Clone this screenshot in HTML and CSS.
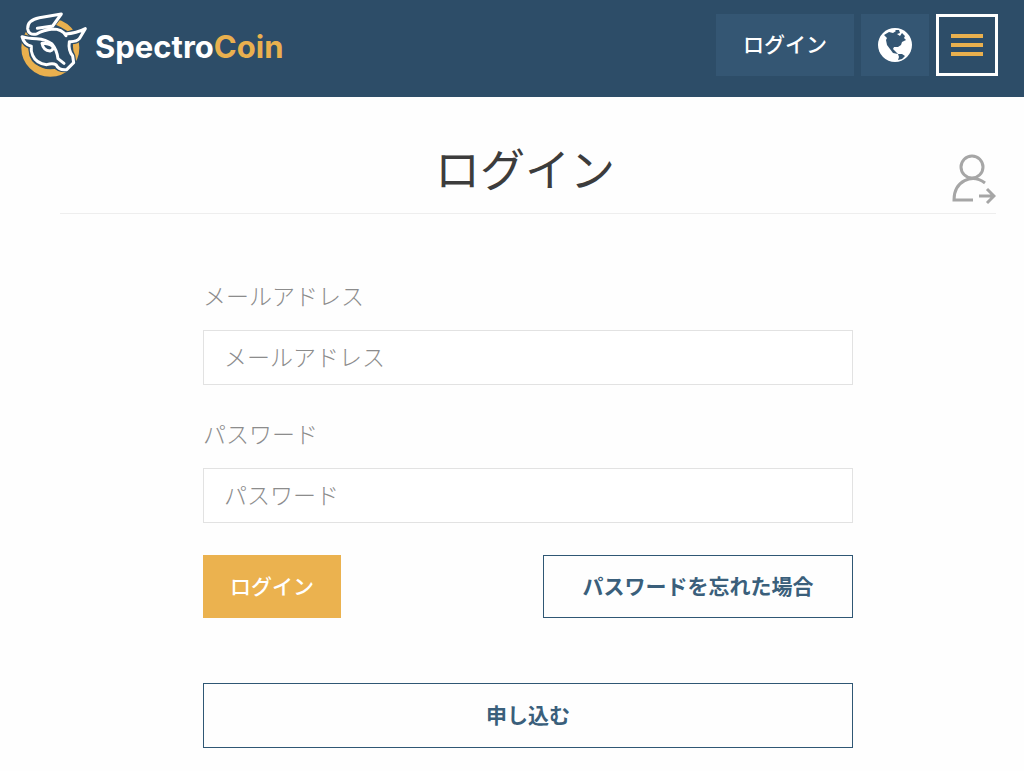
FILE: index.html
```html
<!DOCTYPE html>
<html lang="ja">
<head>
    <meta charset="UTF-8">
    <meta name="viewport" content="width=device-width, initial-scale=1.0">
    <title>ログイン - SpectroCoin</title>
    <link rel="stylesheet" href="styles.css">
</head>
<body>
    <header class="header">
        <a href="#" class="logo">
            <svg class="logo-icon" viewBox="30 24 204 198" aria-hidden="true">
                <circle class="logo-ring" cx="121" cy="131" r="76"/>
                <path class="logo-gap" d="M154 29 L86 41 Q54 50 53 74 Q56 92 76 91 L60 104 L36 98 Q42 122 62 127 L66 154 Q76 180 104 182 L132 180 Q144 198 168 197 L191 176 L188 156 Q178 140 182 113 Q200 114 208 104 L226 74 L172 90 L148 76 L126 66 Z"/>
                <g class="logo-lines">
                    <path d="M82 73 L128 66 L154 30 L88 41 Q52 48 53 74 Q56 95 80 90 Q100 78 128 75 Q156 75 168 95"/>
                    <path d="M166 90 Q200 88 226 74 L208 104 Q200 114 178 113 Q174 138 188 156 L191 176 L170 197 Q146 200 138 182 Q128 176 110 182 Q78 178 68 154 Q62 142 64 127 Q42 122 36 98 Q52 104 80 104 Q108 106 126 120 Q140 136 144 164 L162 178"/>
                    <path d="M96 118 Q100 140 120 141 Q132 138 128 127 Q118 118 96 118 Z"/>
                </g>
            </svg>
            <span class="logo-text">Spectro<span class="logo-coin">Coin</span></span>
        </a>
        <nav class="nav">
            <a href="#" class="nav-login">ログイン</a>
            <button type="button" class="nav-lang" aria-label="言語">
                <svg class="globe" viewBox="0 0 36 36" aria-hidden="true">
                    <circle class="globe-sea" cx="18" cy="18" r="17"/>
                    <path class="globe-land" d="M7 8 L12 5 L16 6 L19 4 L18 3 L22 3 L23 6 L20 7 L23 9 L25 6 L28 9 L27 11 L29 13 L25 15 L24 18 L21 20 L17 20 L16 22 L18 24 L21 27 L16 26 L13 22 L10 18 L9 13 L10 11 Z"/>
                    <path class="globe-land" d="M21 27 L25 27 L28 29 L25 32 L21 33 L22 30 Z"/>
                    <path class="globe-sea" d="M18 20 L21 21 L21 24 L18 23 Z"/>
                </svg>
            </button>
            <button type="button" class="nav-menu" aria-label="メニュー">
                <span class="bar"></span>
                <span class="bar"></span>
                <span class="bar"></span>
            </button>
        </nav>
    </header>

    <main class="container">
        <div class="title-row">
            <h1 class="title">ログイン</h1>
            <svg class="user-icon" viewBox="0 0 46 52" aria-hidden="true">
                <circle cx="22" cy="14" r="11"/>
                <path d="M35 30 C22 20 4 28 4 47 H23 M29 43 H44 M37 36 L44 43 L37 50"/>
            </svg>
        </div>

        <form class="login-form">
            <label for="email" class="label">メールアドレス</label>
            <input type="email" id="email" class="input" placeholder="メールアドレス">

            <label for="password" class="label">パスワード</label>
            <input type="password" id="password" class="input" placeholder="パスワード">

            <div class="actions">
                <button type="submit" class="btn btn-primary">ログイン</button>
                <a href="#" class="btn btn-forgot">パスワードを忘れた場合</a>
            </div>
            <a href="#" class="btn btn-signup">申し込む</a>
        </form>
    </main>
</body>
</html>
```
FILE: styles.css
```css
*{
    padding: 0;
    margin: 0;
    box-sizing: border-box;
}

body{
    background-color: #fefefe;
    color: #3c3c3c;
    font-family: "Noto Sans CJK JP", sans-serif;
}

a{
    text-decoration: none;
}

button{
    font-family: inherit;
    cursor: pointer;
}

/* header */
.header{
    height: 97px;
    padding: 0 26px 7px 20px;
    background-color: #2d4d68;
    display: flex;
    justify-content: space-between;
    align-items: center;
}

.logo{
    display: flex;
    align-items: center;
    gap: 7px;
}

.logo-icon{
    width: 68px;
    height: 66px;
}

.logo-ring{
    fill: none;
    stroke: #e9b04e;
    stroke-width: 22;
}

.logo-gap{
    fill: #2d4d68;
    stroke: #2d4d68;
    stroke-width: 16;
}

.logo-lines{
    fill: none;
    stroke: #fff;
    stroke-width: 9;
    stroke-linejoin: round;
    stroke-linecap: round;
}

.logo-text{
    padding-top: 4px;
    color: #fff;
    font-family: Inter, sans-serif;
    font-size: 31px;
    font-weight: 700;
    line-height: 40px;
}

.logo-coin{
    color: #e9b04e;
}

.nav{
    display: flex;
    gap: 7px;
}

.nav-login,
.nav-lang{
    height: 62px;
    background-color: #345673;
    border: none;
    display: flex;
    justify-content: center;
    align-items: center;
}

.nav-login{
    width: 138px;
    padding-bottom: 4px;
    color: #fff;
    font-size: 21px;
    font-weight: 500;
}

.nav-lang{
    width: 68px;
}

.globe{
    width: 36px;
    height: 36px;
}

.globe-sea{
    fill: #fff;
}

.globe-land{
    fill: #345673;
}

.nav-menu{
    width: 62px;
    height: 62px;
    background: none;
    border: 3px solid #fff;
    display: flex;
    flex-direction: column;
    justify-content: center;
    align-items: center;
    gap: 5px;
}

.bar{
    width: 32px;
    height: 4px;
    background-color: #e9b04e;
}

/* content */
.container{
    padding: 41px 28px 20px 60px;
}

.title-row{
    height: 76px;
    border-bottom: 1px solid #eee;
    position: relative;
}

.title{
    padding-right: 6px;
    font-size: 45px;
    font-weight: 400;
    line-height: 60px;
    text-align: center;
}

.user-icon{
    position: absolute;
    right: 0;
    bottom: 8px;
    width: 46px;
    height: 52px;
    fill: none;
    stroke: #a6a6a6;
    stroke-width: 3;
}

.login-form{
    max-width: 650px;
    margin: 65px auto 0;
}

.label{
    display: block;
    margin-bottom: 18px;
    color: #8c8c8c;
    font-size: 23px;
    font-weight: 300;
    line-height: 33px;
}

.input{
    display: block;
    width: 100%;
    height: 55px;
    margin-bottom: 32px;
    padding: 0 20px 3px;
    background-color: #fff;
    border: 1px solid #e2e2e2;
    color: #3c3c3c;
    font-family: inherit;
    font-size: 23px;
    font-weight: 300;
}

.input::placeholder{
    color: #8c8c8c;
}

.actions{
    display: flex;
    justify-content: space-between;
    margin-bottom: 65px;
}

.btn{
    height: 63px;
    padding-bottom: 4px;
    border: 1px solid #2f5774;
    color: #3a5f7b;
    font-size: 21px;
    font-weight: 700;
    display: flex;
    justify-content: center;
    align-items: center;
}

.btn-primary{
    width: 138px;
    background-color: #ebb24f;
    border-color: #ebb24f;
    color: #fff;
    font-weight: 500;
}

.btn-forgot{
    width: 310px;
}

.btn-signup{
    width: 100%;
    height: 65px;
}
```
